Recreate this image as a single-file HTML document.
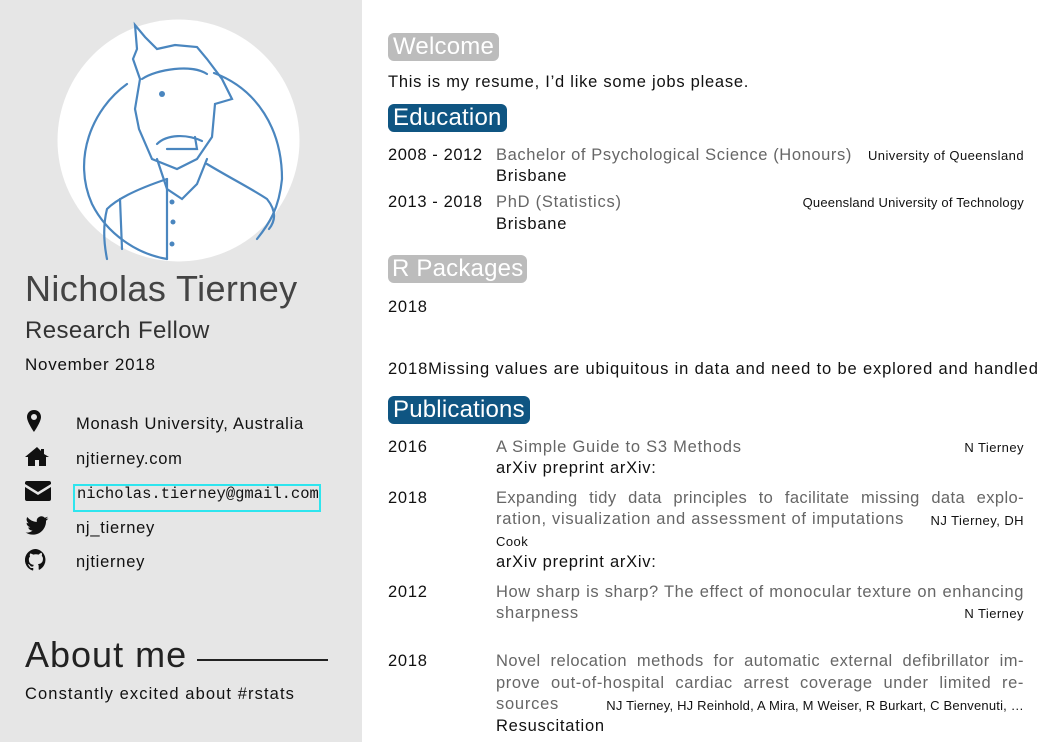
<!DOCTYPE html>
<html><head><meta charset="utf-8"><style>
*{margin:0;padding:0;box-sizing:border-box}
body{width:1040px;height:742px;overflow:hidden;background:#fff;font-family:"Liberation Sans","DejaVu Sans",sans-serif;color:#111;position:relative}
#side{position:absolute;left:0;top:0;width:362px;height:742px;background:#e6e6e6}
.t{position:absolute;white-space:nowrap;line-height:20px;font-size:16.5px;letter-spacing:0.75px}
.g{color:#666}
.s{font-size:13px;letter-spacing:0.45px}
.h{position:absolute;height:28px;line-height:28px;font-size:24px;color:#fff;padding:0 5px;border-radius:6px;letter-spacing:0.2px}
.gr{background:#bcbcbc}.bl{background:#0f5582}
.j{text-align:justify;text-align-last:justify}
svg.i{position:absolute}
</style></head><body>
<div id="side"></div>
<svg style="position:absolute;left:57px;top:19px" width="243" height="243" viewBox="0 0 243 243">
<circle cx="121.5" cy="121.5" r="121" fill="#fff"/>
<g fill="none" stroke="#4a86bf" stroke-width="2.2" stroke-linecap="round">
<path d="M70 65 C35 90 15 140 35 185 C50 215 80 235 110 240"/>
<path d="M157 54 C200 70 225 110 225 160 C222 190 212 205 200 220"/>
<path d="M78 6 L80 30 L76 40 L83 60 L78 90 L82 110 L95 140 L120 150 L140 140 L155 118 L158 85 L175 80 L165 60 L150 40 L140 28 L118 26 L100 30 L88 18 Z"/>
<path d="M85 60 C100 50 135 45 150 55"/>
<path d="M100 125 C110 115 130 115 145 122"/>
<path d="M110 130 L140 130 L138 118"/>
<path d="M100 140 L110 170 L125 180 L140 165 L150 140"/>
<path d="M110 160 C80 170 60 180 50 190 C45 210 48 230 50 240"/>
<path d="M150 145 C175 160 195 170 210 180 C218 190 220 200 212 210"/>
<path d="M110 160 L110 240"/>
<path d="M63 180 L65 230"/>
</g>
<g fill="#4a86bf"><circle cx="105" cy="75" r="3"/><circle cx="115" cy="183" r="2.5"/><circle cx="116" cy="203" r="2.5"/><circle cx="115" cy="225" r="2.5"/></g>
</svg>
<div class="t" style="left:25px;top:268px;font-size:36px;line-height:42px;color:#444;letter-spacing:0.4px">Nicholas Tierney</div>
<div class="t" style="left:25px;top:317px;font-size:24px;line-height:28px;color:#333;letter-spacing:0.4px">Research Fellow</div>
<div class="t" style="left:25px;top:355px;font-size:17px">November 2018</div>

<svg class="i" style="left:27px;top:410px" width="14" height="22" viewBox="0 0 14 22"><path d="M7 0C3 0 0 3 0 7c0 5 7 15 7 15s7-10 7-15C14 3 11 0 7 0zm0 10a3 3 0 1 1 0-6 3 3 0 0 1 0 6z" fill="#111"/></svg>
<div class="t" style="left:76px;top:414px">Monash University, Australia</div>
<svg class="i" style="left:25px;top:447px" width="24" height="19" viewBox="0 0 24 19"><path d="M12 0L0 10h3v9h7v-6h4v6h7v-9h3L19 7V2h-3v2z" fill="#111"/></svg>
<div class="t" style="left:76px;top:449px">njtierney.com</div>
<svg class="i" style="left:25px;top:481px" width="26" height="20" viewBox="0 0 26 20"><path d="M2 0h22a2 2 0 0 1 2 2v1L13 11 0 3V2a2 2 0 0 1 2-2zM0 6l13 8 13-8v12a2 2 0 0 1-2 2H2a2 2 0 0 1-2-2z" fill="#111"/></svg>
<div style="position:absolute;left:73px;top:484px;width:248px;height:28px;border:2px solid #2ee5ee"></div>
<div class="t" style="left:77px;top:484px;font-family:'Liberation Mono','DejaVu Sans Mono',monospace;font-size:15.5px;letter-spacing:0">nicholas.tierney@gmail.com</div>
<svg class="i" style="left:25px;top:516px" width="24" height="19" viewBox="0 0 24 20"><path d="M24 2.5a10 10 0 0 1-2.8.8A5 5 0 0 0 23.3.6a10 10 0 0 1-3.1 1.2A5 5 0 0 0 11.8 6.3 14 14 0 0 1 1.7 1.1a5 5 0 0 0 1.5 6.6A5 5 0 0 1 1 7.1a5 5 0 0 0 3.9 4.8 5 5 0 0 1-2.2.1 5 5 0 0 0 4.6 3.4A10 10 0 0 1 0 17.4 14 14 0 0 0 7.5 19.6c9 0 14-7.5 14-14v-.6A10 10 0 0 0 24 2.5z" fill="#111"/></svg>
<div class="t" style="left:76px;top:518px">nj_tierney</div>
<svg class="i" style="left:25px;top:549px" width="22" height="22" viewBox="0 0 24 24"><path d="M12 0a12 12 0 0 0-3.8 23.4c.6.1.8-.3.8-.6v-2.2c-3.3.7-4-1.4-4-1.4-.6-1.4-1.4-1.8-1.4-1.8-1-.7.1-.7.1-.7 1.2.1 1.8 1.2 1.8 1.2 1 1.8 2.8 1.3 3.5 1 .1-.8.4-1.3.7-1.6-2.7-.3-5.5-1.3-5.5-6 0-1.200.5-2.3 1.3-3.1-.2-.4-.6-1.6.1-3.2 0 0 1-.3 3.3 1.2a11.5 11.5 0 0 1 6 0C17.2 4 18.2 4.3 18.2 4.3c.7 1.6.2 2.8.1 3.2.8.8 1.3 1.9 1.3 3.1 0 4.6-2.8 5.6-5.5 5.9.4.4.8 1.1.8 2.2v3.3c0 .3.2.7.8.6A12 12 0 0 0 12 0z" fill="#111"/></svg>
<div class="t" style="left:76px;top:552px">njtierney</div>

<div class="t" style="left:25px;top:634px;font-size:36px;line-height:42px;color:#222;letter-spacing:1px">About me</div>
<div style="position:absolute;left:197px;top:659px;width:131px;height:2px;background:#222"></div>
<div class="t" style="left:25px;top:684px;letter-spacing:1.1px">Constantly excited about #rstats</div>

<div class="h gr" style="left:388px;top:33px">Welcome</div>
<div class="t" style="left:388px;top:72px">This is my resume, I’d like some jobs please.</div>
<div class="h bl" style="left:388px;top:104px">Education</div>
<div class="t" style="left:388px;top:145px;letter-spacing:0.6px">2008 - 2012</div>
<div class="t g" style="left:496px;top:145px;letter-spacing:0.6px">Bachelor of Psychological Science (Honours)</div>
<div class="t s" style="left:840px;top:146px;width:184px;text-align:right">University of Queensland</div>
<div class="t" style="left:496px;top:166px">Brisbane</div>
<div class="t" style="left:388px;top:192px;letter-spacing:0.6px">2013 - 2018</div>
<div class="t g" style="left:496px;top:192px">PhD (Statistics)</div>
<div class="t s" style="left:740px;top:193px;width:284px;text-align:right;letter-spacing:0.2px">Queensland University of Technology</div>
<div class="t" style="left:496px;top:214px">Brisbane</div>

<div class="h gr" style="left:388px;top:255px;padding:0 4px">R Packages</div>
<div class="t" style="left:388px;top:297px">2018</div>
<div class="t" style="left:388px;top:359px;letter-spacing:0.85px">2018Missing values are ubiquitous in data and need to be explored and handled</div>
<div class="h bl" style="left:388px;top:396px">Publications</div>

<div class="t" style="left:388px;top:437px">2016</div>
<div class="t g" style="left:496px;top:437px">A Simple Guide to S3 Methods</div>
<div class="t s" style="left:900px;top:438px;width:124px;text-align:right">N Tierney</div>
<div class="t" style="left:496px;top:458px">arXiv preprint arXiv:</div>

<div class="t" style="left:388px;top:488px">2018</div>
<div class="t g j" style="left:496px;top:488px;width:528px;letter-spacing:0.4px">Expanding tidy data principles to facilitate missing data explo-</div>
<div class="t g" style="left:496px;top:509px;letter-spacing:0.7px">ration, visualization and assessment of imputations</div>
<div class="t s" style="left:900px;top:511px;width:124px;text-align:right">NJ Tierney, DH</div>
<div class="t s" style="left:496px;top:532px">Cook</div>
<div class="t" style="left:496px;top:552px">arXiv preprint arXiv:</div>

<div class="t" style="left:388px;top:582px">2012</div>
<div class="t g j" style="left:496px;top:582px;width:528px;letter-spacing:0.6px;word-spacing:-3px">How sharp is sharp? The effect of monocular texture on enhancing</div>
<div class="t g" style="left:496px;top:603px">sharpness</div>
<div class="t s" style="left:900px;top:604px;width:124px;text-align:right">N Tierney</div>

<div class="t" style="left:388px;top:651px">2018</div>
<div class="t g j" style="left:496px;top:651px;width:528px;letter-spacing:0.5px">Novel relocation methods for automatic external defibrillator im-</div>
<div class="t g j" style="left:496px;top:673px;width:528px;letter-spacing:0.6px">prove out-of-hospital cardiac arrest coverage under limited re-</div>
<div class="t g" style="left:496px;top:694px">sources</div>
<div class="t s" style="left:560px;top:696px;width:464px;text-align:right;letter-spacing:0.2px">NJ Tierney, HJ Reinhold, A Mira, M Weiser, R Burkart, C Benvenuti, …</div>
<div class="t" style="left:496px;top:716px">Resuscitation</div>
</body></html>
